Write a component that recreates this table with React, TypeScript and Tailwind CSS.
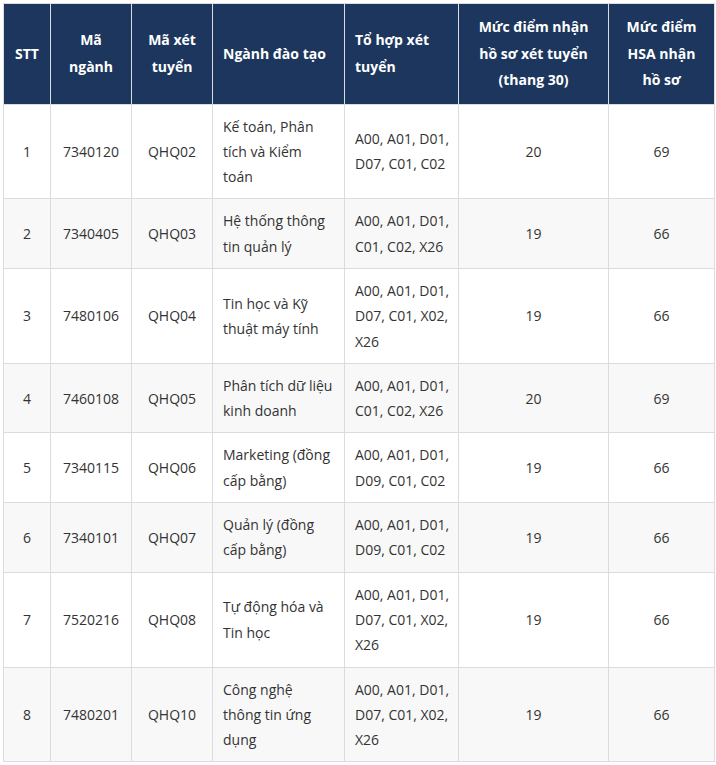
import React from 'react';

type Row = {
  stt: string;
  ma: string;
  maXt: string;
  nganh: string[];
  toHop: string[];
  diem: string;
  hsa: string;
};

const rows: Row[] = [
  { stt: '1', ma: '7340120', maXt: 'QHQ02', nganh: ['Kế toán, Phân', 'tích và Kiểm', 'toán'], toHop: ['A00, A01, D01,', 'D07, C01, C02'], diem: '20', hsa: '69' },
  { stt: '2', ma: '7340405', maXt: 'QHQ03', nganh: ['Hệ thống thông', 'tin quản lý'], toHop: ['A00, A01, D01,', 'C01, C02, X26'], diem: '19', hsa: '66' },
  { stt: '3', ma: '7480106', maXt: 'QHQ04', nganh: ['Tin học và Kỹ', 'thuật máy tính'], toHop: ['A00, A01, D01,', 'D07, C01, X02,', 'X26'], diem: '19', hsa: '66' },
  { stt: '4', ma: '7460108', maXt: 'QHQ05', nganh: ['Phân tích dữ liệu', 'kinh doanh'], toHop: ['A00, A01, D01,', 'C01, C02, X26'], diem: '20', hsa: '69' },
  { stt: '5', ma: '7340115', maXt: 'QHQ06', nganh: ['Marketing (đồng', 'cấp bằng)'], toHop: ['A00, A01, D01,', 'D09, C01, C02'], diem: '19', hsa: '66' },
  { stt: '6', ma: '7340101', maXt: 'QHQ07', nganh: ['Quản lý (đồng', 'cấp bằng)'], toHop: ['A00, A01, D01,', 'D09, C01, C02'], diem: '19', hsa: '66' },
  { stt: '7', ma: '7520216', maXt: 'QHQ08', nganh: ['Tự động hóa và', 'Tin học'], toHop: ['A00, A01, D01,', 'D07, C01, X02,', 'X26'], diem: '19', hsa: '66' },
  { stt: '8', ma: '7480201', maXt: 'QHQ10', nganh: ['Công nghệ', 'thông tin ứng', 'dụng'], toHop: ['A00, A01, D01,', 'D07, C01, X02,', 'X26'], diem: '19', hsa: '66' },
];

const Lines = ({ lines }: { lines: string[] }) => (
  <>
    {lines.map((l, i) => (
      <div key={i} className="whitespace-nowrap">{l}</div>
    ))}
  </>
);

const th = 'border border-[#dcdcdc] bg-[#1c365d] px-[10px] py-[10px] align-middle text-[14px] font-bold leading-[26.5px] text-white';
const td = 'border border-[#dcdcdc] px-[10px] py-[9px] align-middle text-[14px] leading-[25.3px] text-[#333333]';

export default function App() {
  return (
    <div className="min-h-screen bg-white p-[3px] font-['Open_Sans','Noto_Sans',sans-serif]">
      <table className="w-[711px] table-fixed border-collapse">
        <colgroup>
          <col className="w-[47px]" />
          <col className="w-[81px]" />
          <col className="w-[81px]" />
          <col className="w-[132px]" />
          <col className="w-[114px]" />
          <col className="w-[150px]" />
          <col className="w-[106px]" />
        </colgroup>
        <thead>
          <tr>
            <th className={`${th} text-center`}>STT</th>
            <th className={`${th} text-center`}><Lines lines={['Mã', 'ngành']} /></th>
            <th className={`${th} text-center`}><Lines lines={['Mã xét', 'tuyển']} /></th>
            <th className={`${th} text-left`}>Ngành đào tạo</th>
            <th className={`${th} text-left`}><Lines lines={['Tổ hợp xét', 'tuyển']} /></th>
            <th className={`${th} text-center`}><Lines lines={['Mức điểm nhận', 'hồ sơ xét tuyển', '(thang 30)']} /></th>
            <th className={`${th} text-center`}><Lines lines={['Mức điểm', 'HSA nhận', 'hồ sơ']} /></th>
          </tr>
        </thead>
        <tbody>
          {rows.map((r, i) => (
            <tr key={r.stt} className={i % 2 === 1 ? 'bg-[#f8f8f8]' : 'bg-white'}>
              <td className={`${td} text-center`}>{r.stt}</td>
              <td className={`${td} text-center`}>{r.ma}</td>
              <td className={`${td} text-center`}>{r.maXt}</td>
              <td className={`${td} text-left`}><Lines lines={r.nganh} /></td>
              <td className={`${td} text-left`}><Lines lines={r.toHop} /></td>
              <td className={`${td} text-center`}>{r.diem}</td>
              <td className={`${td} text-center`}>{r.hsa}</td>
            </tr>
          ))}
        </tbody>
      </table>
    </div>
  );
}
